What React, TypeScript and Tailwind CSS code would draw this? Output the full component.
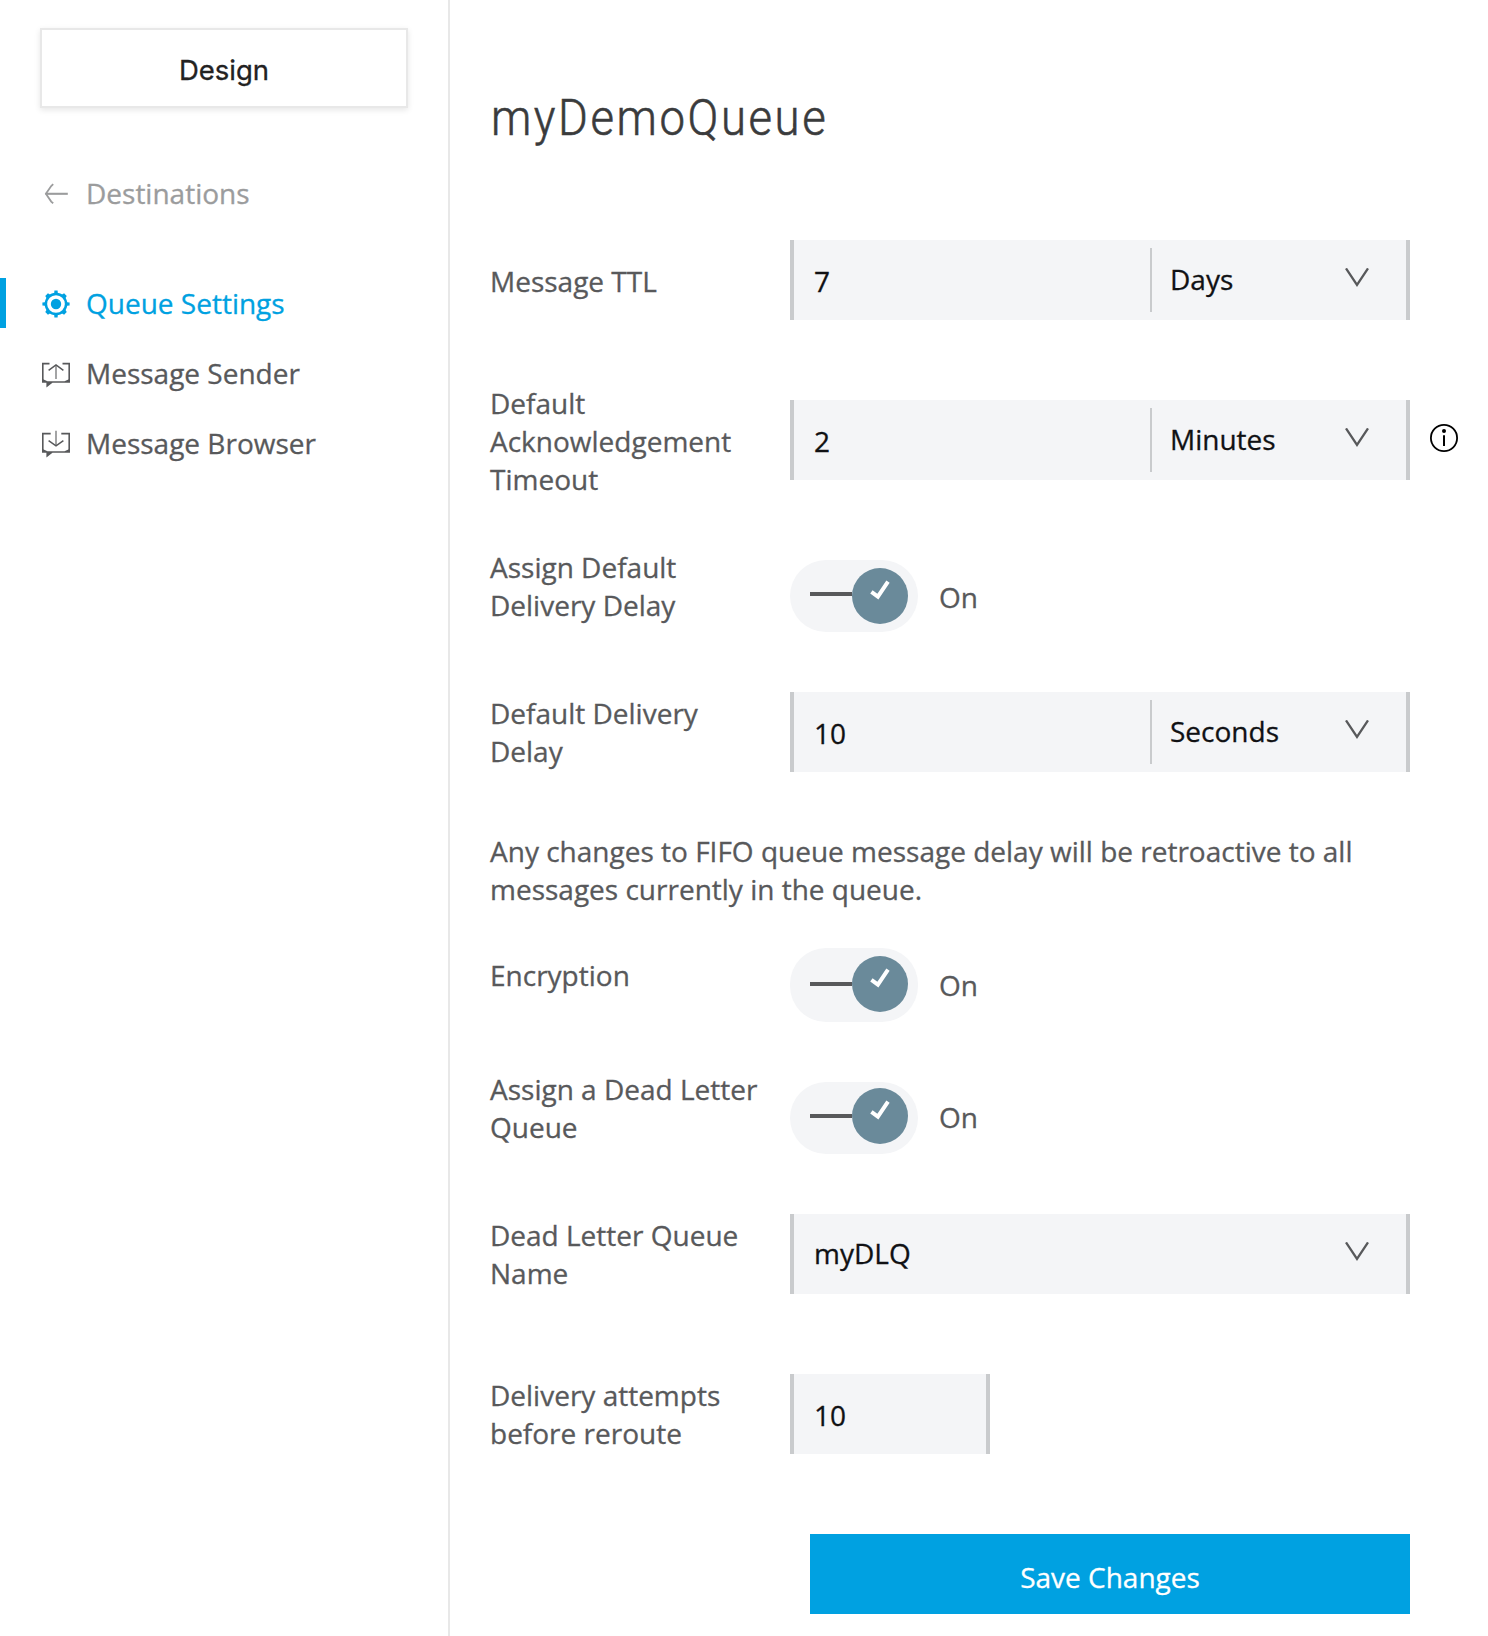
import React from "react";

const Chevron = () => (
  <svg width="24" height="20" viewBox="0 0 24 20" fill="none" className="block shrink-0">
    <path d="M1 0.4 L12 17 L23 0.4" stroke="#58595b" strokeWidth="2.3" />
  </svg>
);

const ArrowLeftIcon = () => (
  <svg width="28" height="28" viewBox="0 0 28 28" fill="none" stroke="#9b9c9d" className="block">
    <path d="M3.5 13.8 H25.8" strokeWidth="2.1" />
    <path d="M11.2 4.2 L9.2 6 L3.9 13.8 L9.2 21.6 L11.2 23.2" strokeWidth="1.8" />
  </svg>
);

const GearIcon = () => (
  <svg width="28" height="28" viewBox="0 0 28 28" fill="none" className="block">
    <circle cx="14" cy="14" r="10.1" stroke="#00a1e1" strokeWidth="2.5" />
    <circle cx="14" cy="14" r="5.2" fill="#00a1e1" />
    {[0, 45, 90, 135, 180, 225, 270, 315].map((a) => (
      <path
        key={a}
        d={a % 90 === 0 ? "M10.2 4.2 L12.2 3 L12.4 0.4 H15.6 L15.8 3 L17.8 4.2 Z" : "M11.4 3.8 L12.1 0.7 H15.9 L16.6 3.8 Z"}
        transform={`rotate(${a} 14 14)`}
        fill="#00a1e1"
      />
    ))}
  </svg>
);

const MessageFrame = ({ children, frame }: { children: React.ReactNode; frame: string }) => (
  <svg width="28" height="28" viewBox="0 0 28 28" fill="none" className="block overflow-visible">
    <path d={frame} stroke="#58595b" strokeWidth="1.6" />
    <path d="M0 18.8 L5.5 21.2 H22.5 L28 18.8 V22.8 H10.5 L4.4 27.4 V22.8 H0 Z" fill="#58595b" />
    <g stroke="#58595b">{children}</g>
  </svg>
);

const SenderIcon = () => (
  <MessageFrame frame="M7.5 3.6 H0.8 V20 M20.5 3.6 H27.2 V20">
    <path d="M14 5.2 V19" strokeWidth="1.1" />
    <path d="M6.6 10.4 L14 5 L21.4 10.4" strokeWidth="1.5" />
  </MessageFrame>
);

const BrowserIcon = () => (
  <MessageFrame frame="M8.7 3.6 H0.8 V20 M19.3 3.6 H27.2 V20">
    <path d="M14 0.7 V15.8" strokeWidth="1.1" />
    <path d="M6.6 10.6 L14 15.8 L21.4 10.6" strokeWidth="1.5" />
  </MessageFrame>
);

const InfoIcon = () => (
  <svg width="28" height="28" viewBox="0 0 28 28" fill="none" className="block">
    <circle cx="14" cy="14" r="13.1" stroke="#000" strokeWidth="1.8" />
    <circle cx="14" cy="6.9" r="2" fill="#000" />
    <path d="M14 11.3 V22" stroke="#000" strokeWidth="2" />
  </svg>
);

const fieldBox = "h-20 border-x-4 border-[#c9cbcd] bg-[#f4f5f7] text-[#101114] flex";

const DurationField = ({ value, unit }: { value: string; unit: string }) => (
  <div className={`${fieldBox} w-[620px]`}>
    <div className="w-[356px] pl-5 pt-[22px]">{value}</div>
    <div className="my-2 w-0.5 bg-[#c9cbcd]" />
    <div className="flex flex-1 items-start justify-between pl-[18px] pr-[37px]">
      <span className="pt-5">{unit}</span>
      <span className="pt-7">
        <Chevron />
      </span>
    </div>
  </div>
);

const Toggle = ({ track, knob, line }: { track: string; knob: string; line: string }) => (
  <div className="flex items-start">
    <div className={`flex w-32 items-start rounded-[36px] bg-[#f4f5f7] pl-5 ${track}`}>
      <div className={`h-1 w-[42px] bg-[#58595b] ${line}`} />
      <div className={`flex size-14 justify-center rounded-full bg-[#6a8a9a] pt-3 ${knob}`}>
        <svg width="22" height="20" viewBox="0 0 22 20" fill="none">
          <path d="M2.4 11.8 L8.9 16.6 L19 1.6" stroke="#fff" strokeWidth="4" />
        </svg>
      </div>
    </div>
    <span className={`ml-[21px] ${knob}`}>
      <span className="block pt-2.5">On</span>
    </span>
  </div>
);

const Row = ({
  label,
  className,
  labelClass = "",
  controlClass = "",
  children,
}: {
  label: string;
  className: string;
  labelClass?: string;
  controlClass?: string;
  children: React.ReactNode;
}) => (
  <div className={`flex items-start ${className}`}>
    <div className="w-[300px] shrink-0 pr-[30px]">
      <div className={labelClass}>{label}</div>
    </div>
    <div className={`flex items-start ${controlClass}`}>{children}</div>
  </div>
);

const NavItem = ({ icon, label, active = false }: { icon: React.ReactNode; label: string; active?: boolean }) => (
  <div
    className={`flex h-[50px] items-center border-l-[6px] pl-9 ${
      active ? "border-[#00a1e1] text-[#00a1e1]" : "border-transparent text-[#58595b]"
    }`}
  >
    <span className="pt-0.5">{icon}</span>
    <span className="ml-4">{label}</span>
  </div>
);

export default function App() {
  return (
    <div className="flex h-[1636px] w-[1488px] overflow-hidden bg-white font-['Open_Sans',sans-serif] text-[28px] leading-[38px] text-[#58595b] [-webkit-text-stroke:0.3px_currentColor]">
      <aside className="w-[450px] shrink-0 border-r-2 border-[#e8e8e8] pt-7">
        <div className="ml-10 flex h-20 w-[368px] items-center justify-center border-2 border-[#e8e8e8] bg-white font-['Inter',sans-serif] text-[27.5px] text-[#222] shadow-[0_2px_6px_rgba(0,0,0,0.1)]">
          <span className="pt-1">Design</span>
        </div>
        <div className="mt-[60px] flex h-[50px] items-center pl-[42px] text-[#9b9c9d]">
          <span className="pt-0.5">
            <ArrowLeftIcon />
          </span>
          <span className="ml-4">Destinations</span>
        </div>
        <nav className="mt-[60px] flex flex-col gap-5">
          <NavItem icon={<GearIcon />} label="Queue Settings" active />
          <NavItem icon={<SenderIcon />} label="Message Sender" />
          <NavItem icon={<BrowserIcon />} label="Message Browser" />
        </nav>
      </aside>

      <main className="flex-1 pl-10 pt-[86px]">
        <h1 className="h-[74px] w-fit origin-left scale-x-[0.9] whitespace-nowrap pl-px pt-0.5 font-['Roboto',sans-serif] text-[50.5px] font-light leading-[60px] tracking-[2.9px] text-[#3a3b3c] [-webkit-text-stroke:0.6px_currentColor]">
          myDemoQueue
        </h1>

        <Row label="Message TTL" className="mt-20" labelClass="pt-[22px]">
          <DurationField value="7" unit="Days" />
        </Row>
        <Row label="Default Acknowledgement Timeout" className="mt-16" controlClass="pt-4">
          <DurationField value="2" unit="Minutes" />
          <span className="ml-5 pt-6">
            <InfoIcon />
          </span>
        </Row>
        <Row label="Assign Default Delivery Delay" className="mt-[50px]" controlClass="pt-3">
          <Toggle track="h-[72px]" knob="mt-2" line="mt-8" />
        </Row>
        <Row label="Default Delivery Delay" className="mt-[60px]" labelClass="pt-0.5">
          <DurationField value="10" unit="Seconds" />
        </Row>
        <p className="mt-[60px] w-[900px]">
          Any changes to FIFO queue message delay will be retroactive to all messages currently in the queue.
        </p>
        <Row label="Encryption" className="mt-10" labelClass="pt-2">
          <Toggle track="h-[74px]" knob="mt-2" line="mt-[34px]" />
        </Row>
        <Row label="Assign a Dead Letter Queue" className="mt-12" controlClass="pt-3">
          <Toggle track="h-[72px]" knob="mt-1.5" line="mt-8" />
        </Row>
        <Row label="Dead Letter Queue Name" className="mt-[60px]" labelClass="pt-0.5">
          <div className={`${fieldBox} w-[620px] items-start justify-between pl-5 pr-[37px]`}>
            <span className="pt-5">myDLQ</span>
            <span className="pt-7">
              <Chevron />
            </span>
          </div>
        </Row>
        <Row label="Delivery attempts before reroute" className="mt-20" labelClass="pt-0.5">
          <div className={`${fieldBox} w-[200px] pl-5 pt-[22px]`}>10</div>
        </Row>
        <button className="ml-[320px] mt-20 block h-20 w-[600px] bg-[#00a1e1] pt-1.5 text-center text-white">
          Save Changes
        </button>
      </main>
    </div>
  );
}
